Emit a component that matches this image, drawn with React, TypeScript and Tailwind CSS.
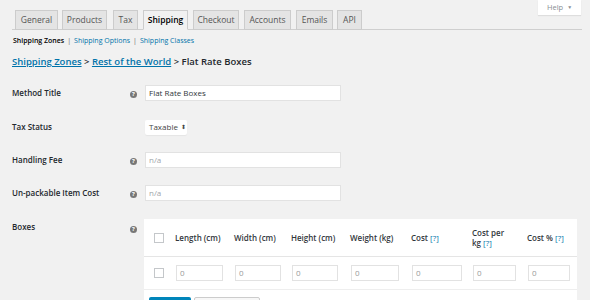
import React from "react";

const tabs = [
  { label: "General", ml: "ml-[3px]", w: "w-[43px]" },
  { label: "Products", ml: "ml-[4px]", w: "w-[45px]" },
  { label: "Tax", ml: "ml-[6px]", w: "w-[25px]" },
  { label: "Shipping", ml: "ml-[5px]", w: "w-[45px]", active: true },
  { label: "Checkout", ml: "ml-[5px]", w: "w-[46px]" },
  { label: "Accounts", ml: "ml-[5px]", w: "w-[47px]" },
  { label: "Emails", ml: "ml-[5px]", w: "w-[37px]" },
  { label: "API", ml: "ml-[4px]", w: "w-[25px]" },
];

function HelpTip() {
  return (
    <span className="inline-flex items-center justify-center w-[7px] h-[7px] rounded-full bg-[#777] text-white text-[6px] font-bold leading-none">
      ?
    </span>
  );
}

function TextInput({ value, placeholder }: { value?: string; placeholder?: string }) {
  return (
    <div className="w-[196px] h-[16px] bg-white border border-[#e2e2e2] flex items-center px-[3px] text-[8px] leading-none">
      {value ? (
        <span className="text-[#32373c]">{value}</span>
      ) : (
        <span className="text-[#a0a5aa]">{placeholder}</span>
      )}
    </div>
  );
}

function Checkbox() {
  return <div className="w-[10px] h-[10px] border border-[#c4c7ca] bg-white" />;
}

const cols = [
  { w: "w-[59px]", iw: "w-[47px]", head: <>Length (cm)</> },
  { w: "w-[57px]", iw: "w-[46px]", head: <>Width (cm)</> },
  { w: "w-[59px]", iw: "w-[46px]", head: <>Height (cm)</> },
  { w: "w-[61px]", iw: "w-[48px]", head: <>Weight (kg)</> },
  { w: "w-[61px]", iw: "w-[50px]", head: <>Cost <span className="text-[#0073aa] font-normal">[?]</span></> },
  { w: "w-[55px]", iw: "w-[43px]", head: <>Cost per<br />kg <span className="text-[#0073aa] font-normal">[?]</span></> },
  { w: "w-[50px]", iw: "w-[42px]", head: <>Cost % <span className="text-[#0073aa] font-normal">[?]</span></> },
];

export default function App() {
  return (
    <div
      className="w-[590px] h-[300px] bg-[#f1f1f1] overflow-hidden relative"
      style={{ fontFamily: '"Open Sans", "Liberation Sans", sans-serif' }}
    >
      {/* Help tab */}
      <div className="absolute top-0 right-[9px] w-[43px] h-[15px] bg-white shadow-[0_1px_1px_rgba(0,0,0,0.08)] flex items-center justify-center text-[7.5px] text-[#8a8f94] gap-[4px]">
        <span>Help</span>
        <span className="text-[5px]">▼</span>
      </div>

      {/* Tabs */}
      <div className="pt-[10px] ml-[12px] mr-[8px] border-b border-[#cfcfcf] flex items-end h-[30px]">
        {tabs.map((t) => (
          <div
            key={t.label}
            className={`${t.ml} ${t.w} h-[20px] -mb-px flex items-center justify-center border border-[#ccc] text-[8.5px] ${
              t.active ? "bg-[#f1f1f1] border-b-[#f1f1f1] text-[#000] font-semibold" : "bg-[#e4e4e4] text-[#555]"
            }`}
          >
            {t.label}
          </div>
        ))}
      </div>

      {/* Sub nav */}
      <div className="mt-[6px] ml-[13px] flex items-center text-[7px] leading-[10px] h-[10px]">
        <span className="font-semibold text-[#000]">Shipping Zones</span>
        <span className="text-[#666] mx-[3px]">|</span>
        <span className="text-[#0073aa]">Shipping Options</span>
        <span className="text-[#666] mx-[3px]">|</span>
        <span className="text-[#0073aa]">Shipping Classes</span>
      </div>

      {/* Breadcrumb */}
      <div className="mt-[9px] ml-[12px] text-[9.5px] font-semibold leading-[14px] text-[#23282d]">
        <span className="text-[#0073aa] underline">Shipping Zones</span>
        <span> &gt; </span>
        <span className="text-[#0073aa] underline">Rest of the World</span>
        <span> &gt; Flat Rate Boxes</span>
      </div>

      {/* Form rows */}
      <div className="mt-[16px] text-[8px] text-[#23282d]">
        <div className="flex items-center h-[16px] ml-[12px]">
          <div className="w-[118px] font-semibold">Method Title</div>
          <div className="w-[15px]"><HelpTip /></div>
          <TextInput value="Flat Rate Boxes" />
        </div>

        <div className="flex items-center h-[16px] ml-[12px] mt-[18px]">
          <div className="w-[133px] font-semibold">Tax Status</div>
          <div className="w-[42px] h-[15px] bg-white rounded-[2px] flex items-center px-[4px] text-[8px] text-[#444] shadow-[0_1px_1px_rgba(0,0,0,0.05)]">
            Taxable
            <span className="ml-[3px] text-[6px] leading-none">⬍</span>
          </div>
        </div>

        <div className="flex items-center h-[16px] ml-[12px] mt-[17px]">
          <div className="w-[118px] font-semibold">Handling Fee</div>
          <div className="w-[15px]"><HelpTip /></div>
          <TextInput placeholder="n/a" />
        </div>

        <div className="flex items-center h-[16px] ml-[12px] mt-[17px]">
          <div className="w-[118px] font-semibold">Un-packable Item Cost</div>
          <div className="w-[15px]"><HelpTip /></div>
          <TextInput placeholder="n/a" />
        </div>

        {/* Boxes */}
        <div className="flex items-start ml-[12px] mt-[18px]">
          <div className="w-[118px] font-semibold pt-[2px]">Boxes</div>
          <div className="w-[14px] pt-[3px]"><HelpTip /></div>
          <div className="w-[433px] bg-white">
            <div className="flex items-center h-[38px] border-b border-[#e5e5e5] font-semibold text-[8px] leading-[10px] text-[#32373c]">
              <div className="w-[31px] pl-[10px]"><Checkbox /></div>
              {cols.map((c, i) => (
                <div key={i} className={c.w}>{c.head}</div>
              ))}
            </div>
            <div className="flex items-center h-[33px] border-b border-[#eee]">
              <div className="w-[31px] pl-[10px]"><Checkbox /></div>
              {cols.map((c, i) => (
                <div key={i} className={c.w}>
                  <div className={`${c.iw} h-[16px] ml-[1px] border border-[#e2e2e2] bg-white flex items-center px-[3px] text-[8px] text-[#999]`}>0</div>
                </div>
              ))}
            </div>
            <div className="h-[20px] flex items-start pt-[7px] pl-[5px] gap-[3px]">
              <div className="w-[42px] h-[14px] bg-[#0085ba] rounded-[2px]" />
              <div className="w-[66px] h-[14px] bg-[#f7f7f7] border border-[#ccc] rounded-[2px]" />
            </div>
          </div>
        </div>
      </div>
    </div>
  );
}
